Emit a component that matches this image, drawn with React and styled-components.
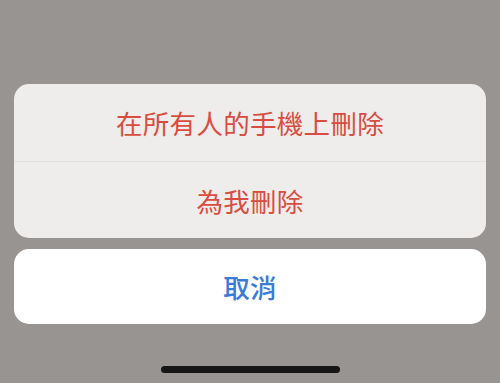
import React from 'react';
import styled, { createGlobalStyle } from 'styled-components';

const GlobalStyle = createGlobalStyle`
  html, body {
    margin: 0;
    padding: 0;
    background: #979492;
  }
  body {
    font-family: "Noto Sans CJK TC", "Noto Sans", sans-serif;
  }
`;

const Screen = styled.div`
  width: 500px;
  height: 383px;
  box-sizing: border-box;
  padding: 84px 14px 0 14px;
  display: flex;
  flex-direction: column;
  align-items: stretch;
  gap: 11px;
  background: #979492;
  overflow: hidden;
`;

const Sheet = styled.div`
  background: ${(p) => (p.$cancel ? '#ffffff' : '#eeedeb')};
  border-radius: 15px;
  overflow: hidden;
  display: flex;
  flex-direction: column;
`;

const Action = styled.div`
  height: ${(p) => p.$h}px;
  display: flex;
  align-items: center;
  justify-content: center;
  font-size: 26.5px;
  letter-spacing: 0.3px;
  font-weight: ${(p) => (p.$cancel ? 500 : 400)};
  color: ${(p) => (p.$cancel ? '#3a7bd5' : '#d94c40')};
  & + & {
    border-top: 1px solid #e2e0de;
  }
`;

const HomeBar = styled.div`
  align-self: center;
  width: 179px;
  height: 7px;
  border-radius: 4px;
  background: #171616;
  margin-top: 31px;
`;

export default function App() {
  return (
    <>
      <GlobalStyle />
      <Screen>
        <Sheet>
          <Action $h={77}>在所有人的手機上刪除</Action>
          <Action $h={76}>為我刪除</Action>
        </Sheet>
        <Sheet $cancel>
          <Action $cancel $h={75}>取消</Action>
        </Sheet>
        <HomeBar />
      </Screen>
    </>
  );
}
